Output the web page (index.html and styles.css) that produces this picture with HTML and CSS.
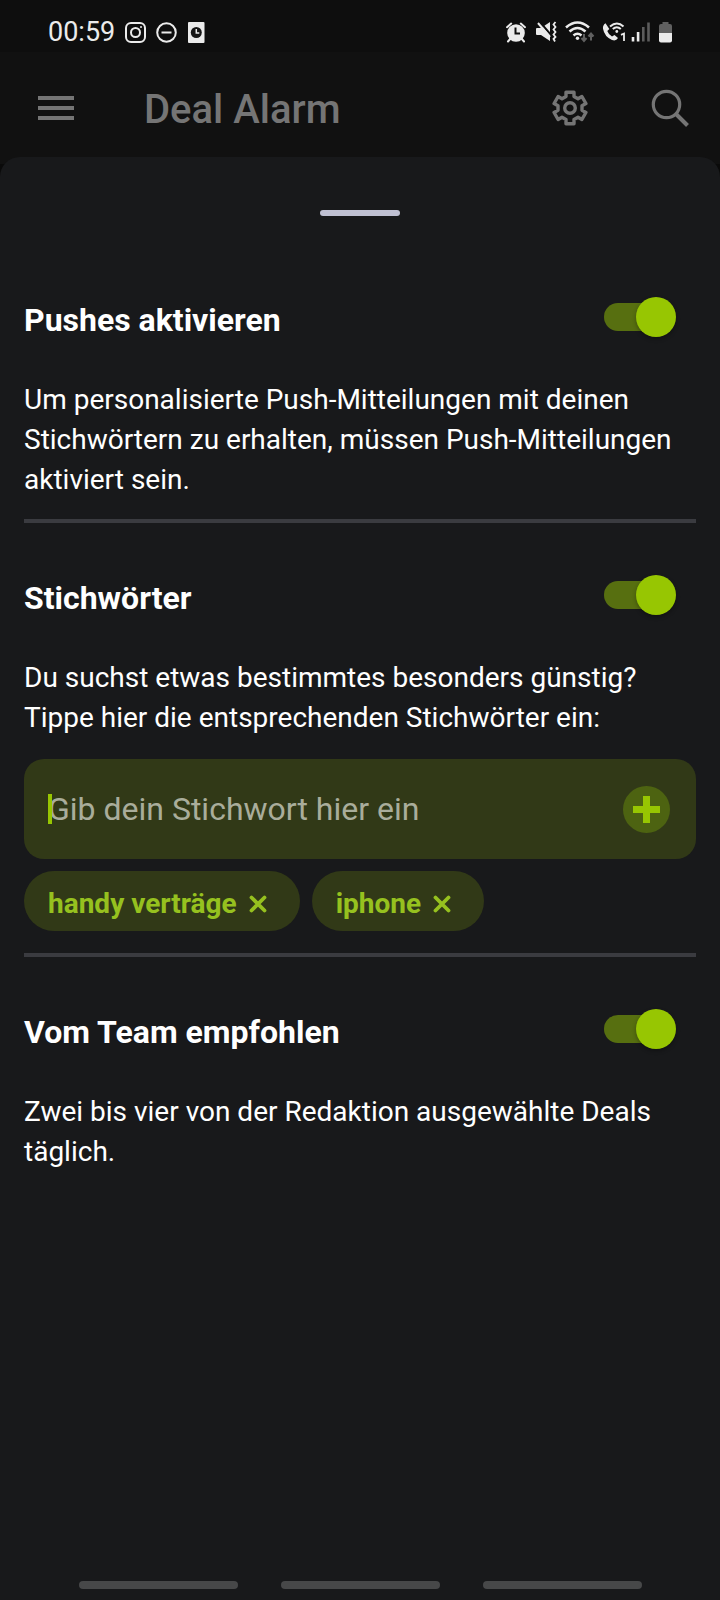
FILE: index.html
```html
<!DOCTYPE html>
<html lang="de">
<head>
<meta charset="utf-8">
<meta name="viewport" content="width=device-width, initial-scale=1">
<title>Deal Alarm</title>
<link rel="stylesheet" href="styles.css">
</head>
<body>
<div class="status">
  <time class="clock">00:59</time>
  <div class="status-left">
    <svg width="21" height="24" viewBox="0 0 21 24" fill="none" stroke="currentColor" stroke-width="2"><rect x="1" y="3" width="19" height="19" rx="5"/><circle cx="10.500" cy="12.500" r="4.500"/><circle cx="16" cy="7" r="1" fill="currentColor" stroke="none"/></svg>
    <svg width="21" height="24" viewBox="0 0 21 24" fill="none" stroke="currentColor" stroke-width="2"><circle cx="10.500" cy="12.500" r="9.300"/><path d="M5.500 12.500h10"/></svg>
    <svg width="18" height="24" viewBox="0 0 18 24"><rect x="1" y="2" width="16.500" height="21" rx="1" fill="currentColor"/><circle cx="9.300" cy="12.500" r="5.500" fill="#161616"/><path d="M9.300 9v4h3" fill="none" stroke="currentColor" stroke-width="1.500"/></svg>
  </div>
  <div class="status-right">
    <svg width="26" height="24" viewBox="0 0 26 24"><circle cx="10" cy="13" r="8.800" fill="currentColor"/><path d="M1 7.200 5.200 3.600M19 7.200l-4.200-3.600M4.500 18.500 2 21.500M15.500 18.500l2.500 3" stroke="currentColor" stroke-width="2" stroke-linecap="round"/><path d="M9.500 7.500v6H14" fill="none" stroke="#0e0e0e" stroke-width="2"/></svg>
    <svg width="25" height="24" viewBox="0 0 25 24"><path d="M0 9q0-1 1-1h4l9-6v19l-9-6H1q-1 0-1-1Z" fill="currentColor"/><path d="M3.500 1.500 15 15" stroke="#0e0e0e" stroke-width="2"/><path d="m2 3 12 14" stroke="currentColor" stroke-width="2"/><path d="m19.500 2-2 2.500 2 2.500-2 2.500 2 2.500-2 2.500 2 2.500-2 2 1.500 2.500" fill="none" stroke="currentColor" stroke-width="1.800"/></svg>
    <svg width="33" height="24" viewBox="0 0 33 24" fill="none" stroke="currentColor" stroke-width="2.600"><path d="M1 7.500q11.500-10 23 0M4.500 11.500q8-7 16 0M8.500 15.500q4-3.500 8 0"/><circle cx="12.500" cy="18.200" r="1.700" fill="currentColor" stroke="none"/><path d="M19 14v7m-2.500-3 2.500 3 2.500-3M26 20.500v-7m-2.500 3 2.500-3 2.500 3" stroke="#606060" stroke-width="2"/></svg>
    <svg width="25" height="24" viewBox="0 0 25 24" fill="none" stroke="currentColor"><path d="M3.500 3.300Q.500 5.300 1 8.800q1.500 8 9 11.200 4 1.600 6-2l-3.500-3-2.500 1.500Q6.500 14.500 5.300 11l2-2Z" fill="currentColor" stroke="none"/><path d="M8 6.500q7-6 13.500 0M10.800 9q4-3.600 8 0" stroke-width="2"/><circle cx="14.800" cy="11.500" r="1.400" fill="currentColor" stroke="none"/><path d="M19 14.800 22 13.500V21" stroke-width="1.800"/></svg>
    <svg width="24" height="24" viewBox="0 0 24 24"><path d="M.700 17h2.600v4.500H.700ZM5.800 12h2.600v9.500H5.800Z" fill="currentColor"/><path d="M11 7h2.600v14.500H11ZM16.200 2.500h2.600v19h-2.600Z" fill="#5c5c5c"/></svg>
    <svg width="14" height="24" viewBox="0 0 14 24"><path d="M0 13V6q0-2 2-2h1.500V2h6v2H11q2 0 2 2v7Z" fill="#606060"/><path d="M0 13h13v7.500q0 2-2 2H2q-2 0-2-2Z" fill="currentColor"/></svg>
  </div>
</div>

<header class="appbar">
  <button class="icon-button" type="button" aria-label="Menü"><svg width="36" height="36" viewBox="0 0 36 36"><path d="M0 6h36v4H0ZM0 16h36v4H0ZM0 26h36v4H0Z" fill="currentColor"/></svg></button>
  <h1 class="title">Deal Alarm</h1>
  <button class="icon-button" type="button" aria-label="Einstellungen"><svg width="36" height="36" viewBox="-18 -18 36 36" fill="none" stroke="currentColor" stroke-width="3.400" stroke-linejoin="round"><path d="M-4-15.700H4v4.200l4 2.300 3.900-2.300 4 7-3.900 2.200v4.600l3.900 2.200-4 7L8 9.200l-4 2.300v4.200h-8v-4.200l-4-2.300-3.900 2.300-4-7 3.900-2.200v-4.600l-3.900-2.200 4-7L-8-9.200l4-2.300Z"/><circle r="5.300"/></svg></button>
  <button class="icon-button" type="button" aria-label="Suchen"><svg width="38" height="38" viewBox="0 0 38 38" fill="none" stroke="currentColor"><circle cx="15.500" cy="15.500" r="13.200" stroke-width="3.200"/><path d="m25 25 11.500 11.500" stroke-width="4"/></svg></button>
</header>

<main class="sheet">
  <div class="grip"></div>

  <section class="section">
    <div class="row">
      <h2><label for="push">Pushes aktivieren</label></h2>
      <input class="switch" id="push" type="checkbox" role="switch" checked>
    </div>
    <p>Um personalisierte Push-Mitteilungen mit deinen Stichwörtern zu erhalten, müssen Push-Mitteilungen aktiviert sein.</p>
  </section>

  <section class="section">
    <div class="row">
      <h2><label for="words">Stichwörter</label></h2>
      <input class="switch" id="words" type="checkbox" role="switch" checked>
    </div>
    <p>Du suchst etwas bestimmtes besonders günstig? Tippe hier die entsprechenden Stichwörter ein:</p>
    <form class="entry">
      <input class="entry-text" type="text" placeholder="Gib dein Stichwort hier ein" aria-label="Stichwort">
      <span class="caret"></span>
      <button class="add" type="button" aria-label="Hinzufügen"><svg width="27" height="27" viewBox="0 0 27 27"><path d="M10 0h7v10h10v7H17v10h-7V17H0v-7h10Z" fill="currentColor"/></svg></button>
    </form>
    <ul class="chips">
      <li class="chip">handy verträge <button class="remove" type="button" aria-label="handy verträge entfernen"><svg width="18" height="18" viewBox="0 0 18 18"><path d="m2.500 2.500 13 13M15.500 2.500l-13 13" stroke="currentColor" stroke-width="3.800" stroke-linecap="round"/></svg></button></li>
      <li class="chip">iphone <button class="remove" type="button" aria-label="iphone entfernen"><svg width="18" height="18" viewBox="0 0 18 18"><path d="m2.500 2.500 13 13M15.500 2.500l-13 13" stroke="currentColor" stroke-width="3.800" stroke-linecap="round"/></svg></button></li>
    </ul>
  </section>

  <section class="section">
    <div class="row">
      <h2><label for="team">Vom Team empfohlen</label></h2>
      <input class="switch" id="team" type="checkbox" role="switch" checked>
    </div>
    <p>Zwei bis vier von der Redaktion ausgewählte Deals täglich.</p>
  </section>

  <div class="navhints"><span></span><span></span><span></span></div>
</main>
</body>
</html>
```

FILE: styles.css
```css
* {
  box-sizing: border-box;
}

body {
  margin: 0;
  min-height: 100vh;
  display: flex;
  flex-direction: column;
  background: #0a0a0a;
  color: #fff;
  font-family: Roboto, "Liberation Sans", sans-serif;
  font-size: 28px;
  line-height: 40px;
}

button {
  padding: 0;
  border: 0;
  background: none;
  color: inherit;
  font: inherit;
}

svg {
  display: block;
}

h1, h2, p, ul {
  margin: 0;
  padding: 0;
}

.status {
  display: flex;
  align-items: center;
  height: 52px;
  padding: 12px 47px 0 48px;
  background: #0e0e0e;
  color: #ebebeb;
}

.clock {
  font-size: 27px;
}

.status-left {
  display: flex;
  gap: 10px;
  margin-left: 10px;
}

.status-right {
  display: flex;
  gap: 4px;
  margin-left: auto;
}

.appbar {
  display: flex;
  align-items: center;
  height: 112px;
  padding: 0 31px 0 38px;
  background: #111;
  color: #757575;
}

.title {
  flex: 1;
  margin-left: 70px;
  padding-top: 3px;
  font-size: 40px;
  font-weight: 500;
}

.appbar .icon-button:last-child {
  margin-left: 63px;
}

.sheet {
  flex: 1;
  display: flex;
  flex-direction: column;
  margin-top: -7px;
  padding: 53px 24px 11px;
  border-radius: 20px 20px 0 0;
  background: #18191b;
}

.grip {
  align-self: center;
  width: 80px;
  height: 6px;
  margin-bottom: 29px;
  border-radius: 3px;
  background: #bfc0d2;
}

.section {
  padding: 52px 0 19px;
}

.section + .section {
  border-top: 4px solid #3a3b40;
}

.row {
  display: flex;
  align-items: flex-start;
  justify-content: space-between;
  margin-bottom: 37px;
  padding-right: 20px;
}

h2 {
  font-size: 32px;
  font-weight: 700;
  line-height: 46px;
}

.switch {
  appearance: none;
  position: relative;
  width: 72px;
  height: 40px;
  margin: 0;
}

.switch::before {
  content: "";
  position: absolute;
  inset: 6px 8px 6px 0;
  border-radius: 14px;
  background: #576f10;
}

.switch::after {
  content: "";
  position: absolute;
  top: 0;
  right: 0;
  width: 40px;
  height: 40px;
  border-radius: 50%;
  background: #97c602;
  box-shadow: 0 2px 4px rgba(0, 0, 0, 0.3);
}

.entry {
  position: relative;
  display: flex;
  align-items: center;
  height: 100px;
  margin-top: 21px;
  padding: 0 26px 0 24px;
  border-radius: 20px;
  background: #313917;
}

.entry-text {
  flex: 1;
  min-width: 0;
  height: 60px;
  padding: 0;
  border: 0;
  outline: 0;
  background: none;
  color: #fff;
  font: inherit;
  font-size: 32px;
}

.entry-text::placeholder {
  color: #a9ad9b;
  opacity: 1;
}

.caret {
  position: absolute;
  top: 35px;
  left: 24px;
  width: 4px;
  height: 30px;
  background: #97c602;
}

.add {
  display: grid;
  place-items: center;
  width: 47px;
  height: 47px;
  border-radius: 50%;
  background: #4d6311;
  color: #97c602;
}

.chips {
  display: flex;
  flex-wrap: wrap;
  gap: 12px;
  margin: 12px 0 3px;
  list-style: none;
}

.chip {
  display: flex;
  align-items: center;
  gap: 12px;
  height: 60px;
  padding: 6px 33px 0 24px;
  border-radius: 30px;
  background: #313917;
  color: #96c11f;
  font-weight: 700;
}

.navhints {
  display: flex;
  justify-content: center;
  gap: 43px;
  margin-top: auto;
}

.navhints span {
  width: 159px;
  height: 8px;
  border-radius: 4px;
  background: #474849;
}
```
